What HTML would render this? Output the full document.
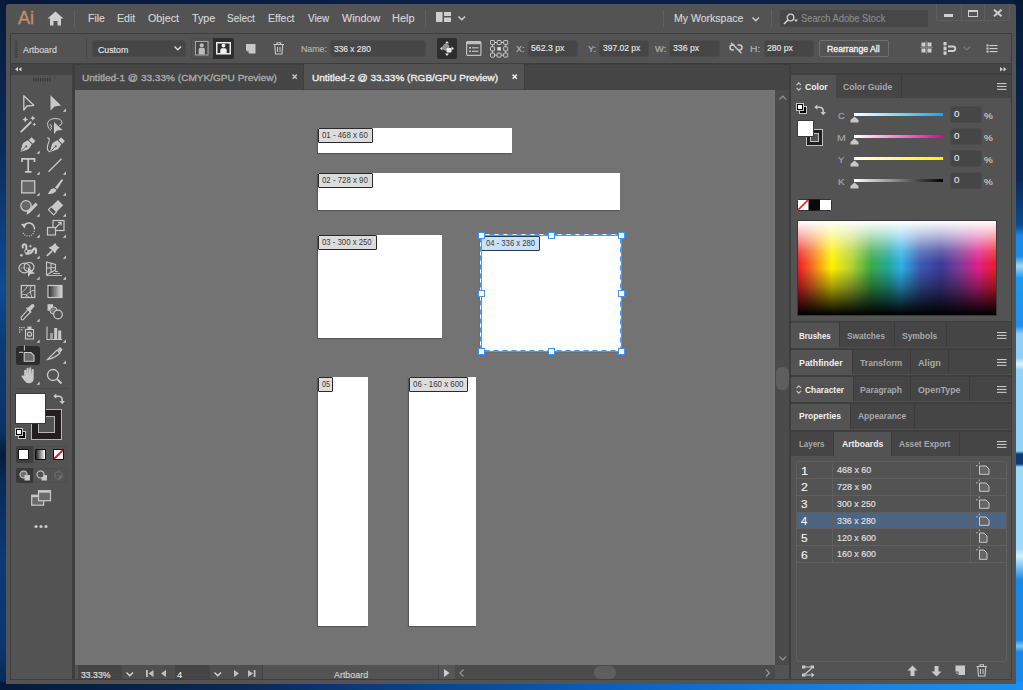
<!DOCTYPE html>
<html><head><meta charset="utf-8"><style>
html,body{margin:0;padding:0;width:1023px;height:690px;overflow:hidden;background:#0b2446;}
.a{position:absolute;box-sizing:border-box;}
.t{position:absolute;white-space:nowrap;line-height:1;font-family:"Liberation Sans",sans-serif;transform-origin:0 0;}
svg{position:absolute;overflow:visible;}
</style></head><body>
<div class="a" style="left:0;top:0;width:1023px;height:690px;background:#0a2346"></div>
<div class="a" style="left:0;top:0;width:1023px;height:6px;background:linear-gradient(90deg,#06183a 0%,#0a2248 50%,#082040 100%)"></div>
<div class="a" style="left:0;top:0;width:8px;height:690px;background:linear-gradient(180deg,#071a3a 0px,#0a2c5c 150px,#0b3f7e 230px,#0c4b92 290px,#0a3c78 340px,#0a3468 430px,#061b3c 455px,#082a58 480px,#0a3a78 560px,#0a3670 650px,#072450 690px)"></div>
<div class="a" style="left:1014px;top:0;width:9px;height:690px;background:linear-gradient(180deg,#061a38 0px,#0a2a55 180px,#0b4a92 225px,#1a8ae8 236px,#1a8ae8 256px,#a0d8f5 266px,#1a9af0 278px,#1e90ee 326px,#8ed0f5 334px,#8ed0f5 358px,#e0f4fc 364px,#90d4f8 370px,#90d4f8 451px,#0b3c7a 454px,#0b3c7a 464px,#9cd8f8 467px,#9cd8f8 548px,#d8f0fc 556px,#9cd8f8 562px,#1a88e8 580px,#1a88e8 640px,#7cc4f0 646px,#1a88e8 652px,#1a88e8 690px)"></div>
<div class="a" style="left:0;top:682px;width:1023px;height:8px;background:linear-gradient(90deg,#041a3a 0%,#0a2a5a 25%,#0a3a78 35%,#0a50a0 50%,#0a60c0 60%,#1278d8 75%,#1a82e0 85%,#1a90f0 100%)"></div>
<div class="a" style="left:6px;top:4px;width:1010px;height:680px;background:#535353;border-radius:3px 3px 0 0;"></div>
<div class="a" style="left:10px;top:33px;width:1002px;height:31px;background:#535353;border:1px solid #3e3e3e;"></div>
<div class="a" style="left:10px;top:64px;width:1002px;height:616px;background:#3e3e3e;"></div>
<div class="a" style="left:11px;top:64px;width:61px;height:11px;background:#454545;"></div>
<div class="a" style="left:11px;top:75px;width:61px;height:604px;background:#535353;"></div>
<div class="a" style="left:75px;top:64px;width:714px;height:26px;background:#454545;"></div>
<div class="a" style="left:303px;top:64px;width:1px;height:26px;background:#3e3e3e;"></div>
<div class="a" style="left:304px;top:64px;width:220px;height:26px;background:#535353;"></div>
<div class="a" style="left:304px;top:89px;width:220px;height:1px;background:#4a4a4a;"></div>
<div class="a" style="left:524px;top:64px;width:1px;height:26px;background:#3e3e3e;"></div>
<div class="a" style="left:525px;top:64px;width:264px;height:1px;background:#3e3e3e;"></div>
<div class="a" style="left:75px;top:64px;width:228px;height:1px;background:#3e3e3e;"></div>
<div class="a" style="left:75px;top:90px;width:700px;height:575px;background:#737373;"></div>
<div class="a" style="left:775px;top:90px;width:14px;height:575px;background:#4b4b4b;"></div>
<div class="a" style="left:776px;top:367px;width:13px;height:23px;background:#5e5e5e;border-radius:6px;"></div>
<div class="a" style="left:75px;top:665px;width:700px;height:14px;background:#535353;"></div>
<div class="a" style="left:455px;top:665px;width:320px;height:14px;background:#4b4b4b;"></div>
<div class="a" style="left:775px;top:665px;width:14px;height:14px;background:#535353;"></div>
<div class="a" style="left:791px;top:64px;width:220px;height:9px;background:#454545;"></div>
<div class="a" style="left:791px;top:75px;width:220px;height:246px;background:#535353;"></div>
<div class="a" style="left:791px;top:75px;width:220px;height:23px;background:#454545;"></div>
<div class="a" style="left:791px;top:75px;width:45px;height:23px;background:#535353;"></div>
<div class="a" style="left:791px;top:322px;width:220px;height:26px;background:#454545;"></div>
<div class="a" style="left:791px;top:347px;width:220px;height:1px;background:#4e4e4e;"></div>
<div class="a" style="left:791px;top:323px;width:48px;height:25px;background:#535353;"></div>
<div class="a" style="left:791px;top:350px;width:220px;height:25px;background:#454545;"></div>
<div class="a" style="left:791px;top:374px;width:220px;height:1px;background:#4e4e4e;"></div>
<div class="a" style="left:791px;top:350px;width:61px;height:25px;background:#535353;"></div>
<div class="a" style="left:791px;top:377px;width:220px;height:25px;background:#454545;"></div>
<div class="a" style="left:791px;top:401px;width:220px;height:1px;background:#4e4e4e;"></div>
<div class="a" style="left:791px;top:377px;width:62px;height:25px;background:#535353;"></div>
<div class="a" style="left:791px;top:404px;width:220px;height:26px;background:#454545;"></div>
<div class="a" style="left:791px;top:429px;width:220px;height:1px;background:#4e4e4e;"></div>
<div class="a" style="left:791px;top:404px;width:59px;height:26px;background:#535353;"></div>
<div class="a" style="left:791px;top:432px;width:220px;height:24px;background:#454545;"></div>
<div class="a" style="left:834px;top:432px;width:57px;height:24px;background:#535353;"></div>
<div class="a" style="left:791px;top:456px;width:220px;height:223px;background:#535353;"></div>
<div class="a" style="left:318px;top:128px;width:194px;height:25px;background:#ffffff;box-shadow:-1px 1px 1px rgba(0,0,0,0.25);"></div>
<div class="a" style="left:318px;top:173px;width:302px;height:37px;background:#ffffff;box-shadow:-1px 1px 1px rgba(0,0,0,0.25);"></div>
<div class="a" style="left:318px;top:235px;width:124px;height:103px;background:#ffffff;box-shadow:-1px 1px 1px rgba(0,0,0,0.25);"></div>
<div class="a" style="left:481px;top:235px;width:140px;height:116px;background:#ffffff;box-shadow:-1px 1px 1px rgba(0,0,0,0.25);"></div>
<div class="a" style="left:318px;top:377px;width:50px;height:249px;background:#ffffff;box-shadow:-1px 1px 1px rgba(0,0,0,0.25);"></div>
<div class="a" style="left:409px;top:377px;width:67px;height:249px;background:#ffffff;box-shadow:-1px 1px 1px rgba(0,0,0,0.25);"></div>
<svg style="left:47px;top:11px" width="17" height="15" viewBox="0 0 17 15"><path d="M8.5 0.5 L16.5 7.5 L14 7.5 L14 14.5 L10.5 14.5 L10.5 10 L6.5 10 L6.5 14.5 L3 14.5 L3 7.5 L0.5 7.5 Z" fill="#cfcfcf"/></svg>
<div class="a" style="left:74px;top:10px;width:1px;height:17px;background:#606060;"></div>
<svg style="left:436px;top:12px" width="16" height="11"><rect x="0" y="0" width="6.5" height="10" fill="#cfcfcf"/><rect x="8" y="0" width="7" height="4" fill="#cfcfcf"/><rect x="8" y="5.5" width="7" height="4.5" fill="#cfcfcf"/></svg>
<svg style="left:458px;top:16px" width="8" height="5"><path d="M0.5 0.5 L3.8 3.8 L7 0.5" stroke="#cfcfcf" stroke-width="1.4" fill="none"/></svg>
<div class="a" style="left:425px;top:10px;width:1px;height:17px;background:#606060;"></div>
<div class="a" style="left:663px;top:10px;width:1px;height:17px;background:#606060;"></div>
<svg style="left:752px;top:17px" width="8" height="5"><path d="M0.5 0.5 L3.8 3.8 L7 0.5" stroke="#cfcfcf" stroke-width="1.4" fill="none"/></svg>
<div class="a" style="left:771px;top:10px;width:1px;height:17px;background:#606060;"></div>
<div class="a" style="left:780px;top:10px;width:148px;height:17px;background:#474747;border-radius:2px;"></div>
<svg style="left:783px;top:13px" width="15" height="12"><circle cx="7.5" cy="4.5" r="3.3" stroke="#cfcfcf" stroke-width="1.3" fill="none"/><path d="M5.2 6.8 L1 11" stroke="#cfcfcf" stroke-width="1.6"/><path d="M11 6.5 L15 6.5 L13 9 Z" fill="#cfcfcf"/></svg>
<div class="a" style="left:936px;top:4px;width:74px;height:17px;border:1px solid #5e5e5e;border-top:none;border-radius:0 0 3px 3px;"></div>
<div class="a" style="left:961px;top:4px;width:1px;height:16px;background:#5e5e5e;"></div>
<div class="a" style="left:984px;top:4px;width:1px;height:16px;background:#5e5e5e;"></div>
<div class="a" style="left:944px;top:14px;width:9px;height:3px;background:#cfcfcf;"></div>
<div class="a" style="left:968px;top:9.5px;width:9.5px;height:7.5px;border:1.6px solid #cfcfcf;border-top-width:2px;"></div>
<svg style="left:993px;top:8.5px" width="10" height="8"><path d="M1 0.8 L8.5 7.3 M8.5 0.8 L1 7.3" stroke="#cfcfcf" stroke-width="2"/></svg>
<svg style="left:14.5px;top:40.5px" width="3" height="18"><rect x="0" y="0.0" width="2.5" height="1.1" fill="#383838"/><rect x="0" y="2.2" width="2.5" height="1.1" fill="#383838"/><rect x="0" y="4.4" width="2.5" height="1.1" fill="#383838"/><rect x="0" y="6.6" width="2.5" height="1.1" fill="#383838"/><rect x="0" y="8.8" width="2.5" height="1.1" fill="#383838"/><rect x="0" y="11.0" width="2.5" height="1.1" fill="#383838"/><rect x="0" y="13.2" width="2.5" height="1.1" fill="#383838"/><rect x="0" y="15.4" width="2.5" height="1.1" fill="#383838"/></svg>
<div class="a" style="left:86px;top:38px;width:1px;height:21px;background:#474747;"></div>
<div class="a" style="left:92px;top:40px;width:94px;height:17px;background:#464646;border:1px solid #4b4b4b;border-radius:3px;"></div>
<svg style="left:174px;top:46px" width="8" height="5"><path d="M0.5 0.5 L3.8 3.8 L7 0.5" stroke="#d8d8d8" stroke-width="1.4" fill="none"/></svg>
<div class="a" style="left:191px;top:38px;width:43px;height:21px;border:1px solid #4a4a4a;border-radius:2px;"></div>
<div class="a" style="left:213px;top:38px;width:21px;height:21px;background:#2d2d2d;border-radius:0 2px 2px 0;"></div>
<svg style="left:194.5px;top:41px" width="14" height="15"><rect x="0.5" y="0.5" width="12.5" height="13.5" stroke="#a8a8a8" fill="#474747"/><circle cx="6.75" cy="4.2" r="2" fill="#bdbdbd"/><path d="M3.7 13.5 L3.7 8.6 Q3.7 6.8 5.4 6.8 L8.1 6.8 Q9.8 6.8 9.8 8.6 L9.8 13.5 Z" fill="#bdbdbd"/></svg>
<svg style="left:215.5px;top:42px" width="15" height="13"><rect x="0.75" y="0.75" width="13.5" height="11" stroke="#eeeeee" stroke-width="1.5" fill="#2d2d2d"/><circle cx="7.5" cy="3.6" r="1.9" fill="#f2f2f2"/><path d="M4.3 11.5 L4.3 7.9 Q4.3 6.2 6 6.2 L9 6.2 Q10.7 6.2 10.7 7.9 L10.7 11.5 Z" fill="#f2f2f2"/></svg>
<svg style="left:246px;top:43.5px" width="10" height="10"><path d="M0 0 L9.5 0 L9.5 9.5 L3.3 9.5 L0 6.2 Z" fill="#c8c8c8"/><path d="M0.3 6.5 L3 6.5 L3 9.2 Z" fill="#8a8a8a"/></svg>
<svg style="left:273px;top:42px" width="12" height="13"><path d="M0.5 2.5 L11 2.5 M4 2.5 L4 0.8 L7.5 0.8 L7.5 2.5 M1.8 3 L2.5 12 L9 12 L9.7 3" stroke="#c8c8c8" stroke-width="1.1" fill="none"/><path d="M4.5 5 L4.5 10 M7 5 L7 10" stroke="#c8c8c8" stroke-width="1"/></svg>
<div class="a" style="left:330px;top:40px;width:96px;height:17px;background:#464646;border:1px solid #4b4b4b;border-radius:3px;"></div>
<div class="a" style="left:437px;top:38px;width:20px;height:21px;background:#2d2d2d;border-radius:2px;"></div>
<svg style="left:439px;top:40px" width="16" height="17"><path d="M8 1 L10 3.5 L6 3.5 Z M8 16 L10 13.5 L6 13.5 Z M1 8.5 L3.5 6.5 L3.5 10.5 Z M15 8.5 L12.5 6.5 L12.5 10.5 Z" fill="#e0e0e0"/><circle cx="7" cy="7.3" r="3" fill="#8f8f8f" stroke="#bdbdbd" stroke-width="0.6"/><rect x="7.5" y="8" width="5" height="4.6" rx="0.8" fill="#e8e8e8"/></svg>
<svg style="left:466px;top:41px" width="16" height="15"><rect x="0.6" y="0.6" width="14.3" height="13.8" rx="1" stroke="#c0c0c0" stroke-width="1.2" fill="none"/><rect x="0.6" y="0.6" width="14.3" height="2.6" fill="#c0c0c0"/><rect x="3" y="6" width="2" height="1.6" fill="#c0c0c0"/><rect x="6" y="6.2" width="6.5" height="1.2" fill="#c0c0c0"/><rect x="3" y="9.5" width="2" height="1.6" fill="#c0c0c0"/><rect x="6" y="9.7" width="6.5" height="1.2" fill="#c0c0c0"/></svg>
<svg style="left:489.5px;top:40px" width="19" height="18"><rect x="0.5" y="0.5" width="4" height="4" rx="0.6" stroke="#c8c8c8" stroke-width="1" fill="none"/><rect x="7.1" y="0.5" width="4" height="4" rx="0.6" stroke="#c8c8c8" stroke-width="1" fill="none"/><rect x="13.7" y="0.5" width="4" height="4" rx="0.6" stroke="#c8c8c8" stroke-width="1" fill="none"/><rect x="0.5" y="6.8" width="4" height="4" rx="0.6" stroke="#c8c8c8" stroke-width="1" fill="none"/><rect x="7.4" y="7.1" width="3.4" height="3.4" fill="#e0e0e0"/><rect x="13.7" y="6.8" width="4" height="4" rx="0.6" stroke="#c8c8c8" stroke-width="1" fill="none"/><rect x="0.5" y="13.1" width="4" height="4" rx="0.6" stroke="#c8c8c8" stroke-width="1" fill="none"/><rect x="7.1" y="13.1" width="4" height="4" rx="0.6" stroke="#c8c8c8" stroke-width="1" fill="none"/><rect x="13.7" y="13.1" width="4" height="4" rx="0.6" stroke="#c8c8c8" stroke-width="1" fill="none"/><path d="M4.5 2.5 L7.1 2.5 M11.1 2.5 L13.7 2.5 M4.5 15.1 L7.1 15.1 M11.1 15.1 L13.7 15.1 M2.5 4.5 L2.5 6.8 M2.5 10.8 L2.5 13.1 M15.7 4.5 L15.7 6.8 M15.7 10.8 L15.7 13.1" stroke="#c8c8c8" stroke-width="1"/></svg>
<div class="a" style="left:528px;top:40px;width:50px;height:17px;background:#464646;border:1px solid #4b4b4b;border-radius:3px;"></div>
<div class="a" style="left:599px;top:40px;width:50px;height:17px;background:#464646;border:1px solid #4b4b4b;border-radius:3px;"></div>
<div class="a" style="left:669px;top:40px;width:51px;height:17px;background:#464646;border:1px solid #4b4b4b;border-radius:3px;"></div>
<svg style="left:729px;top:42px" width="14" height="12"><path d="M5.5 3 L3.5 3 Q1 3 1 5.5 Q1 8 3.5 8 L5 8 M8.5 3 L10.5 3 Q13 3 13 5.5 Q13 8 10.5 8 L9 8" stroke="#c8c8c8" stroke-width="1.5" fill="none"/><path d="M2 0.8 L12.5 11.2" stroke="#c8c8c8" stroke-width="1.5"/></svg>
<div class="a" style="left:764px;top:40px;width:50px;height:17px;background:#464646;border:1px solid #4b4b4b;border-radius:3px;"></div>
<div class="a" style="left:819px;top:40px;width:70px;height:17px;border:1px solid #6e6e6e;border-radius:2px;"></div>
<svg style="left:920px;top:41px" width="14" height="14"><rect x="1.5" y="1.5" width="4" height="4" fill="#cfcfcf"/><rect x="7.5" y="1.5" width="4" height="4" fill="#cfcfcf"/><rect x="1.5" y="7.5" width="4" height="4" fill="#cfcfcf"/><rect x="7.5" y="7.5" width="4" height="4" fill="#cfcfcf"/><path d="M6.5 0 L6.5 13 M0 6.5 L13 6.5" stroke="#8a8a8a" stroke-width="0.8"/></svg>
<svg style="left:943px;top:42px" width="14" height="13"><rect x="0.5" y="0" width="3" height="3.5" fill="#cfcfcf"/><rect x="0.5" y="4.7" width="3" height="3.5" fill="#cfcfcf"/><rect x="0.5" y="9.4" width="3" height="3.5" fill="#cfcfcf"/><path d="M5 4.5 L10 4.5 Q12.3 4.5 12.3 6.8 Q12.3 9 10 9 L5 9" stroke="#cfcfcf" stroke-width="1.8" fill="none"/></svg>
<svg style="left:963px;top:46px" width="8" height="5"><path d="M0.5 0.5 L3.8 3.8 L7 0.5" stroke="#7a7a7a" stroke-width="1.2" fill="none"/></svg>
<svg style="left:986px;top:44px" width="12" height="9"><rect x="0.5" y="0.5" width="2" height="2" fill="#cfcfcf"/><rect x="0.5" y="3.5" width="2" height="2" fill="#cfcfcf"/><rect x="0.5" y="6.5" width="2" height="2" fill="#cfcfcf"/><rect x="3.5" y="1" width="8" height="1.1" fill="#cfcfcf"/><rect x="3.5" y="4" width="8" height="1.1" fill="#cfcfcf"/><rect x="3.5" y="7" width="8" height="1.1" fill="#cfcfcf"/></svg>
<svg style="left:14.5px;top:67px" width="7" height="5"><path d="M3 0 L3 4.5 L0 2.25 Z M6.5 0 L6.5 4.5 L3.5 2.25 Z" fill="#d0d0d0"/></svg>
<svg style="left:32.5px;top:77.5px" width="18" height="4"><rect x="0.0" y="0" width="1.1" height="3.5" fill="#383838"/><rect x="2.3" y="0" width="1.1" height="3.5" fill="#383838"/><rect x="4.6" y="0" width="1.1" height="3.5" fill="#383838"/><rect x="6.9" y="0" width="1.1" height="3.5" fill="#383838"/><rect x="9.2" y="0" width="1.1" height="3.5" fill="#383838"/><rect x="11.5" y="0" width="1.1" height="3.5" fill="#383838"/><rect x="13.8" y="0" width="1.1" height="3.5" fill="#383838"/><rect x="16.1" y="0" width="1.1" height="3.5" fill="#383838"/></svg>
<svg style="left:18px;top:92.5px" width="22" height="20" viewBox="0 0 22 20"><path d="M5.8 2.8 L5.8 17 L9 13 L15.8 12.3 Z" stroke="#c9c9c9" stroke-width="1.3" fill="none" stroke-linejoin="round"/></svg>
<svg style="left:44.5px;top:92.5px" width="22" height="20" viewBox="0 0 22 20"><path d="M5.5 2.3 L5.5 17.5 L9.5 13.5 L16 12.6 Z" fill="#c9c9c9"/><path d="M21.0 15.5 L21.0 18.7 L17.8 18.7 Z" fill="#c9c9c9"/></svg>
<svg style="left:18px;top:113.5px" width="22" height="20" viewBox="0 0 22 20"><path d="M3.2 17.6 L12.8 8.3" stroke="#c9c9c9" stroke-width="1.9" stroke-linecap="round"/><path d="M7.3 2.6 L8.26 4.54 L10.2 5.5 L8.26 6.46 L7.3 8.4 L6.34 6.46 L4.4 5.5 L6.34 4.54 Z M14.8 1.6 L15.66 3.34 L17.400000000000002 4.2 L15.66 5.06 L14.8 6.800000000000001 L13.94 5.06 L12.200000000000001 4.2 L13.94 3.34 Z M16.3 8.4 L16.93 9.67 L18.2 10.3 L16.93 10.93 L16.3 12.200000000000001 L15.67 10.93 L14.4 10.3 L15.67 9.67 Z" fill="#c9c9c9"/></svg>
<svg style="left:44.5px;top:113.5px" width="22" height="20" viewBox="0 0 22 20"><path d="M6 16.5 Q3 15 2.5 10.5 Q2.5 5 10 4.5 Q17 4.5 17 9 Q17 11 14 11.5" stroke="#c9c9c9" stroke-width="1" fill="none"/><path d="M9 8 L9 20 L12 16.5 L17.5 16 Z" fill="#c9c9c9"/><path d="M4.5 11 Q6 10 6.5 12 Q5.5 13.5 6.5 15" stroke="#c9c9c9" stroke-width="1" fill="none"/></svg>
<svg style="left:18px;top:134.5px" width="22" height="20" viewBox="0 0 22 20"><path d="M2.5 17 L4.3 9.8 Q4.8 8.2 6.3 7.3 L9.8 5.2 L13.8 9.2 L11.7 12.7 Q10.8 14.2 9.2 14.7 Z" fill="#c9c9c9"/><path d="M10.9 4.9 L13.6 2.3 L17.4 6.1 L14.8 8.8 Z" fill="#c9c9c9"/><path d="M2.7 16.8 L7.6 11.9" stroke="#535353" stroke-width="0.9"/><circle cx="8.3" cy="11.2" r="1" fill="#535353"/><path d="M21.7 15.5 L21.7 18.7 L18.5 18.7 Z" fill="#c9c9c9"/></svg>
<svg style="left:44.5px;top:134.5px" width="22" height="20" viewBox="0 0 22 20"><g transform="translate(2.5,0)"><path d="M2.5 17 L4.3 9.8 Q4.8 8.2 6.3 7.3 L9.8 5.2 L13.8 9.2 L11.7 12.7 Q10.8 14.2 9.2 14.7 Z" fill="#c9c9c9"/><path d="M10.9 4.9 L13.6 2.3 L17.4 6.1 L14.8 8.8 Z" fill="#c9c9c9"/><path d="M2.7 16.8 L7.6 11.9" stroke="#535353" stroke-width="0.9"/><circle cx="8.3" cy="11.2" r="1" fill="#535353"/></g><path d="M2 3 Q5 2.5 4 6.5 Q2.3 10.5 2.3 13 Q2.5 16.5 5.5 16.8" stroke="#c9c9c9" stroke-width="1.1" fill="none"/></svg>
<svg style="left:18px;top:155.5px" width="22" height="20" viewBox="0 0 22 20"><path d="M4 6 L4 2.8 L16.5 2.8 L16.5 6 M10.2 2.8 L10.2 15.5 M7 15.8 L13.5 15.8" stroke="#c9c9c9" stroke-width="1.7" fill="none"/><path d="M21.7 15.5 L21.7 18.7 L18.5 18.7 Z" fill="#c9c9c9"/></svg>
<svg style="left:44.5px;top:155.5px" width="22" height="20" viewBox="0 0 22 20"><path d="M3.5 15.8 L16.5 2.8" stroke="#c9c9c9" stroke-width="1.3"/><path d="M21.0 15.5 L21.0 18.7 L17.8 18.7 Z" fill="#c9c9c9"/></svg>
<svg style="left:18px;top:176.5px" width="22" height="20" viewBox="0 0 22 20"><rect x="3.7" y="3.9" width="13" height="12" fill="#676767" stroke="#c9c9c9" stroke-width="1.3"/><path d="M21.7 15.5 L21.7 18.7 L18.5 18.7 Z" fill="#c9c9c9"/></svg>
<svg style="left:44.5px;top:176.5px" width="22" height="20" viewBox="0 0 22 20"><path d="M10 10.6 L16.2 2.7 Q17.6 1.6 17.9 3.2 L12.3 12.3 Z" fill="#c9c9c9"/><path d="M9 11.2 Q6 11.2 5 13.6 Q4 15.8 2.6 16.9 Q7.5 17.6 9.9 15.3 Q11.4 13.7 11.5 12.7 Z" fill="#c9c9c9"/><path d="M21.0 15.5 L21.0 18.7 L17.8 18.7 Z" fill="#c9c9c9"/></svg>
<svg style="left:18px;top:197.5px" width="22" height="20" viewBox="0 0 22 20"><circle cx="8" cy="7.8" r="5.2" fill="#676767" stroke="#c9c9c9" stroke-width="1.3"/><path d="M8.3 16.8 L9.3 13.2 L17.6 4.6 L19.7 6.7 L11.5 15.3 Z" fill="#c9c9c9"/><path d="M21.7 15.5 L21.7 18.7 L18.5 18.7 Z" fill="#c9c9c9"/></svg>
<svg style="left:44.5px;top:197.5px" width="22" height="20" viewBox="0 0 22 20"><path d="M13 2 L18.2 7.2 L11.6 13.8 L6.4 8.6 Z" fill="#c9c9c9"/><path d="M6.4 8.6 L11.6 13.8 L8.6 16.8 L3.4 11.6 Z" stroke="#c9c9c9" stroke-width="1.2" fill="none" stroke-linejoin="round"/><path d="M21.0 15.5 L21.0 18.7 L17.8 18.7 Z" fill="#c9c9c9"/></svg>
<svg style="left:18px;top:218.5px" width="22" height="20" viewBox="0 0 22 20"><path d="M5.5 7 Q8 3.5 11.5 4 Q16.5 5 16.5 10.5" stroke="#c9c9c9" stroke-width="1.4" fill="none"/><path d="M16.3 12 Q15 17 10.5 17 Q6 17 4.8 13" stroke="#c9c9c9" stroke-width="1.2" stroke-dasharray="1,1.3" fill="none"/><path d="M3 5 L8.5 4.8 L6.5 9.5 Z" fill="#c9c9c9"/><path d="M21.7 15.5 L21.7 18.7 L18.5 18.7 Z" fill="#c9c9c9"/></svg>
<svg style="left:44.5px;top:218.5px" width="22" height="20" viewBox="0 0 22 20"><rect x="8" y="1.5" width="11" height="10" stroke="#c9c9c9" stroke-width="1.2" fill="none"/><rect x="2.5" y="8.5" width="8" height="7.5" stroke="#c9c9c9" stroke-width="1.2" fill="#5a5a5a"/><path d="M10.5 9 L16 3.5 M13 3.5 L16.2 3.3 L16 6.5" stroke="#c9c9c9" stroke-width="1.1" fill="none"/><path d="M21.0 15.5 L21.0 18.7 L17.8 18.7 Z" fill="#c9c9c9"/></svg>
<svg style="left:18px;top:239.5px" width="22" height="20" viewBox="0 0 22 20"><path d="M4.8 7.6 Q4.2 4.5 6.3 4.2 Q8.6 4.3 8.3 7.5 Q8 10.5 9 13.3" stroke="#c9c9c9" stroke-width="2" fill="none" stroke-linecap="round"/><path d="M8.5 13.6 Q12.8 14.2 15 10 Q16.5 7.8 17.6 8.8 Q18.6 10.2 17.8 13" stroke="#c9c9c9" stroke-width="2.3" fill="none" stroke-linecap="round"/><path d="M8.2 10 L14 9.5 L9.5 13.5 Z" fill="#c9c9c9"/><circle cx="8.2" cy="11.1" r="1.7" fill="#535353" stroke="#c9c9c9" stroke-width="0.9"/><circle cx="3.4" cy="15.2" r="1.3" fill="#c9c9c9"/><path d="M12.4 4.8 L13.9 6.2 L12.4 7.6 L10.9 6.2 Z" fill="#c9c9c9"/><path d="M21.7 15.5 L21.7 18.7 L18.5 18.7 Z" fill="#c9c9c9"/></svg>
<svg style="left:44.5px;top:239.5px" width="22" height="20" viewBox="0 0 22 20"><path d="M3.6 7.7 Q7.6 6.4 10.2 3 Q11.3 6.3 14.5 7.6 Q11.2 9.7 10 13.5 Q7.6 9.6 3.6 7.7 Z" fill="#c9c9c9"/><path d="M6.8 11.2 L2.4 15.3" stroke="#c9c9c9" stroke-width="1.7" stroke-linecap="round"/><path d="M21.0 15.5 L21.0 18.7 L17.8 18.7 Z" fill="#c9c9c9"/></svg>
<svg style="left:18px;top:260.5px" width="22" height="20" viewBox="0 0 22 20"><ellipse cx="6.5" cy="7" rx="5.5" ry="4.8" stroke="#c9c9c9" stroke-width="1.2" fill="none"/><ellipse cx="11" cy="6" rx="5" ry="4.5" stroke="#c9c9c9" stroke-width="1.2" fill="none"/><path d="M3 7 L13 7" stroke="#c9c9c9" stroke-width="0.9" stroke-dasharray="1.5,1"/><path d="M10 6.5 L10 16 L12.5 13 L17 12.5 Z" fill="#c9c9c9"/><path d="M21.7 15.5 L21.7 18.7 L18.5 18.7 Z" fill="#c9c9c9"/></svg>
<svg style="left:44.5px;top:260.5px" width="22" height="20" viewBox="0 0 22 20"><path d="M1.5 1 L1.5 14 L10.5 9 L10.5 3.5 Z M6 2 L6 11.5 M1.5 7 L10.5 6.5" stroke="#c9c9c9" stroke-width="1.1" fill="none"/><path d="M1.5 14.5 L17 14.5 M8 12.5 L15 12.5 M10 10.5 L13 10.5" stroke="#c9c9c9" stroke-width="0.9"/><path d="M21.0 15.5 L21.0 18.7 L17.8 18.7 Z" fill="#c9c9c9"/></svg>
<svg style="left:18px;top:281.5px" width="22" height="20" viewBox="0 0 22 20"><rect x="3.3" y="3.5" width="13.5" height="12" stroke="#c9c9c9" stroke-width="1.2" fill="none"/><path d="M3.5 11 Q8 7 10 3.5 M3.5 13 Q8 11 11 15.5 M7.5 15.5 Q9 10 16.8 8 M13 3.5 Q11 8 14 15.5" stroke="#c9c9c9" stroke-width="0.9" fill="none"/></svg>
<svg style="left:44.5px;top:281.5px" width="22" height="20" viewBox="0 0 22 20"><defs><linearGradient id="gr" x1="0" x2="1"><stop offset="0" stop-color="#2a2a2a"/><stop offset="1" stop-color="#dcdcdc"/></linearGradient></defs><rect x="3" y="3.5" width="14" height="12" stroke="#c9c9c9" stroke-width="1.2" fill="url(#gr)"/></svg>
<svg style="left:18px;top:302.5px" width="22" height="20" viewBox="0 0 22 20"><path d="M3.5 16.5 L3 14.5 L10 6.5 L12.5 9 L5 16.8 Z" stroke="#c9c9c9" stroke-width="1.1" fill="none"/><path d="M9.5 5 L13.5 1.5 Q15 0.5 16 1.8 Q17 3 16 4 L12.5 8 Z" fill="#c9c9c9"/><path d="M8.5 4.8 L13.2 9.5" stroke="#c9c9c9" stroke-width="1.6"/><path d="M21.7 15.5 L21.7 18.7 L18.5 18.7 Z" fill="#c9c9c9"/></svg>
<svg style="left:44.5px;top:302.5px" width="22" height="20" viewBox="0 0 22 20"><rect x="2.5" y="1.2" width="5.5" height="6.5" fill="#c9c9c9"/><circle cx="8.5" cy="7.5" r="3.6" fill="#777" stroke="#c9c9c9" stroke-width="1"/><circle cx="13" cy="11.5" r="4.3" fill="#535353" stroke="#c9c9c9" stroke-width="1.2"/></svg>
<svg style="left:18px;top:323.5px" width="22" height="20" viewBox="0 0 22 20"><g transform="translate(0,1)"><rect x="7.5" y="4.5" width="8" height="9.5" stroke="#c9c9c9" stroke-width="1.1" fill="none"/><rect x="9.5" y="1.5" width="4" height="3" fill="#c9c9c9"/><circle cx="11.5" cy="9.2" r="2" stroke="#c9c9c9" stroke-width="1.2" fill="none"/><rect x="1" y="2" width="1.2" height="1.2" fill="#c9c9c9"/><rect x="3.2" y="2" width="1.2" height="1.2" fill="#c9c9c9"/><rect x="5.4" y="2" width="1.2" height="1.2" fill="#c9c9c9"/><rect x="1" y="4.2" width="1.2" height="1.2" fill="#c9c9c9"/><rect x="3.2" y="4.2" width="1.2" height="1.2" fill="#c9c9c9"/><rect x="1" y="6.4" width="1.2" height="1.2" fill="#c9c9c9"/></g><path d="M21.7 15.5 L21.7 18.7 L18.5 18.7 Z" fill="#c9c9c9"/></svg>
<svg style="left:44.5px;top:323.5px" width="22" height="20" viewBox="0 0 22 20"><g transform="translate(0,1.5)"><path d="M2 1 L2 14 L17 14" stroke="#c9c9c9" stroke-width="1.1" fill="none"/><rect x="5" y="7.5" width="3" height="6.5" fill="#9a9a9a"/><rect x="9.2" y="2.5" width="3" height="11.5" fill="#c9c9c9"/><rect x="13.2" y="5" width="3" height="9" fill="#c9c9c9"/></g><path d="M21.0 15.5 L21.0 18.7 L17.8 18.7 Z" fill="#c9c9c9"/></svg>
<div class="a" style="left:16px;top:346px;width:24px;height:19px;background:#2c2c2c;border-radius:3px;"></div>
<svg style="left:18px;top:344.5px" width="22" height="20" viewBox="0 0 22 20"><path d="M1 7.3 L5 7.3 M6.4 0.5 L6.4 5.5" stroke="#c9c9c9" stroke-width="1"/><path d="M6.2 7.5 L13 7.5 L16 10.5 L16 16.2 L6.2 16.2 Z" fill="#6a6a6a" stroke="#c9c9c9" stroke-width="1.1"/></svg>
<svg style="left:44.5px;top:344.5px" width="22" height="20" viewBox="0 0 22 20"><path d="M2.5 14.5 L12 5 L15 8 Q10 13 2.5 14.5 Z" stroke="#c9c9c9" stroke-width="1.1" fill="none"/><path d="M12.5 4.5 L15 2 L17.5 4.5 L15.5 7.5 Z" fill="#c9c9c9"/><path d="M21.0 15.5 L21.0 18.7 L17.8 18.7 Z" fill="#c9c9c9"/></svg>
<svg style="left:18px;top:365.5px" width="22" height="20" viewBox="0 0 22 20"><g transform="translate(1.2,0.5)"><path d="M5 9.5 L5 4.5 Q5 3.3 6 3.3 Q7 3.3 7 4.5 L7 8 L7.3 2.5 Q7.3 1.3 8.4 1.3 Q9.5 1.3 9.5 2.5 L9.5 8 L10 2 Q10 0.8 11 0.8 Q12 0.8 12 2 L12 8.5 L12.5 3.5 Q12.5 2.5 13.5 2.5 Q14.5 2.5 14.5 3.5 L14.5 11 Q14.5 15.5 11.5 16.5 Q7.5 17.5 5.5 14.5 L2.5 10.5 Q2 9.5 2.8 9 Q3.8 8.5 5 9.5 Z" fill="#c9c9c9"/></g><path d="M21.7 15.5 L21.7 18.7 L18.5 18.7 Z" fill="#c9c9c9"/></svg>
<svg style="left:44.5px;top:365.5px" width="22" height="20" viewBox="0 0 22 20"><g transform="translate(0,1.5)"><circle cx="8" cy="7.5" r="5.5" stroke="#c9c9c9" stroke-width="1.3" fill="none"/><path d="M12 11.5 L16.5 16" stroke="#c9c9c9" stroke-width="2"/></g></svg>
<div class="a" style="left:15px;top:388px;width:53px;height:1px;background:#4a4a4a;"></div>
<div class="a" style="left:31px;top:409px;width:31px;height:31px;background:#231f20;border:1px solid #b5b5b5;"></div>
<div class="a" style="left:38px;top:416px;width:17px;height:17px;background:#535353;border:1px solid #b5b5b5;"></div>
<div class="a" style="left:15px;top:393px;width:31px;height:31px;background:#ffffff;border:1px solid #3a3a3a;"></div>
<svg style="left:53px;top:393px" width="12" height="12"><path d="M2.5 3.2 L5.5 3.2 Q9.2 3.2 9.2 7 L9.2 8.5" stroke="#c9c9c9" stroke-width="1.5" fill="none"/><path d="M0.3 3.2 L3.3 0.6 L3.3 5.8 Z M9.2 11.2 L6.5 8 L11.9 8 Z" fill="#c9c9c9"/></svg>
<svg style="left:15px;top:428px" width="12" height="12"><rect x="3.5" y="3.5" width="7" height="7" fill="#000" stroke="#c8c8c8" stroke-width="1"/><rect x="0.5" y="0.5" width="7" height="7" fill="#fff" stroke="#c8c8c8" stroke-width="1"/><rect x="1.5" y="1.5" width="5" height="5" fill="#fff" stroke="#000" stroke-width="1"/></svg>
<div class="a" style="left:16px;top:446px;width:51px;height:17px;border:1px solid #4e4e4e;border-radius:2px;"></div>
<div class="a" style="left:16px;top:446px;width:17px;height:17px;background:#3e3e3e;border-radius:2px 0 0 2px;"></div>
<div class="a" style="left:33px;top:447px;width:1px;height:15px;background:#4e4e4e;"></div>
<div class="a" style="left:50px;top:447px;width:1px;height:15px;background:#4e4e4e;"></div>
<div class="a" style="left:18px;top:449px;width:11px;height:11px;background:#ffffff;border:1px solid #111;border-radius:1px;"></div>
<div class="a" style="left:35px;top:449px;width:11px;height:11px;border:1px solid #111;border-radius:1px;background:linear-gradient(90deg,#222,#fff)"></div>
<svg style="left:53px;top:449px" width="11" height="11"><rect x="0.5" y="0.5" width="10" height="10" fill="#fff" stroke="#111"/><path d="M1 10 L10 1" stroke="#e8141b" stroke-width="1.8"/></svg>
<div class="a" style="left:16px;top:468px;width:51px;height:15px;border:1px solid #4e4e4e;border-radius:2px;"></div>
<div class="a" style="left:16px;top:468px;width:17px;height:15px;background:#393939;border-radius:2px 0 0 2px;"></div>
<div class="a" style="left:33px;top:469px;width:1px;height:13px;background:#4e4e4e;"></div>
<div class="a" style="left:50px;top:469px;width:1px;height:13px;background:#4e4e4e;"></div>
<svg style="left:19px;top:470px" width="12" height="11"><circle cx="4.5" cy="4.5" r="3.5" stroke="#c9c9c9" stroke-width="1.1" fill="#707070"/><rect x="5.5" y="5" width="5.5" height="5.5" fill="#c9c9c9"/></svg>
<svg style="left:36px;top:470px" width="12" height="11"><rect x="5.5" y="5" width="5.5" height="5.5" fill="#c9c9c9"/><circle cx="4.5" cy="4.5" r="3.5" stroke="#c9c9c9" stroke-width="1.1" fill="#535353"/></svg>
<svg style="left:53px;top:470px" width="12" height="11"><circle cx="5.5" cy="5.5" r="3.8" stroke="#6e6e6e" stroke-width="1.1" fill="none"/><path d="M5.5 5.5 L9.3 5.5 A3.8 3.8 0 0 1 5.5 9.3 Z" fill="#6e6e6e"/></svg>
<svg style="left:31px;top:490px" width="21" height="17"><rect x="0.7" y="5.2" width="12" height="10" fill="#6a6a6a" stroke="#c9c9c9" stroke-width="1.2"/><rect x="0.7" y="5.2" width="12" height="2" fill="#c9c9c9"/><rect x="7.5" y="0.7" width="12" height="10" fill="#6a6a6a" stroke="#c9c9c9" stroke-width="1.2"/><rect x="7.5" y="0.7" width="12" height="2" fill="#c9c9c9"/></svg>
<svg style="left:34px;top:524px" width="14" height="5"><circle cx="2" cy="2.5" r="1.6" fill="#c9c9c9"/><circle cx="7" cy="2.5" r="1.6" fill="#c9c9c9"/><circle cx="12" cy="2.5" r="1.6" fill="#c9c9c9"/></svg>
<svg style="left:291.8px;top:73.8px" width="6" height="6"><path d="M0.6 0.6 L4.8 4.8 M4.8 0.6 L0.6 4.8" stroke="#bdbdbd" stroke-width="1.5"/></svg>
<svg style="left:512.2px;top:73.8px" width="6" height="6"><path d="M0.6 0.6 L4.8 4.8 M4.8 0.6 L0.6 4.8" stroke="#e8e8e8" stroke-width="1.5"/></svg>
<svg style="left:779px;top:95px" width="8" height="5"><path d="M0.5 4.3 L3.8 1 L7 4.3" stroke="#9a9a9a" stroke-width="1.2" fill="none"/></svg>
<svg style="left:779px;top:656px" width="8" height="5"><path d="M0.5 0.7 L3.8 4 L7 0.7" stroke="#9a9a9a" stroke-width="1.2" fill="none"/></svg>
<div class="a" style="left:78px;top:665px;width:44px;height:14px;background:#454545;"></div>
<div class="a" style="left:122px;top:665px;width:16px;height:14px;background:#4e4e4e;"></div>
<svg style="left:126px;top:672px" width="8" height="5"><path d="M0.5 0.5 L3.8 3.8 L7 0.5" stroke="#d8d8d8" stroke-width="1.3" fill="none"/></svg>
<div class="a" style="left:138px;top:665px;width:37px;height:14px;background:#4e4e4e;"></div>
<svg style="left:145.5px;top:670px" width="8" height="7"><rect x="0" y="0" width="1.8" height="7" fill="#c0c0c0"/><path d="M7.5 0 L7.5 7 L2.5 3.5 Z" fill="#c0c0c0"/></svg>
<svg style="left:161px;top:670px" width="6" height="7"><path d="M5 0 L5 7 L0 3.5 Z" fill="#c0c0c0"/></svg>
<div class="a" style="left:175px;top:665px;width:35px;height:14px;background:#454545;"></div>
<div class="a" style="left:210px;top:665px;width:16px;height:14px;background:#4e4e4e;"></div>
<svg style="left:213.5px;top:672px" width="8" height="5"><path d="M0.5 0.5 L3.8 3.8 L7 0.5" stroke="#d8d8d8" stroke-width="1.3" fill="none"/></svg>
<div class="a" style="left:226px;top:665px;width:37px;height:14px;background:#4e4e4e;"></div>
<div class="a" style="left:262px;top:665px;width:1px;height:14px;background:#454545;"></div>
<svg style="left:234px;top:670px" width="6" height="7"><path d="M0 0 L0 7 L5 3.5 Z" fill="#c0c0c0"/></svg>
<svg style="left:247.5px;top:670px" width="8" height="7"><path d="M0 0 L0 7 L5 3.5 Z" fill="#c0c0c0"/><rect x="5.7" y="0" width="1.8" height="7" fill="#c0c0c0"/></svg>
<div class="a" style="left:438px;top:665px;width:1px;height:14px;background:#454545;"></div>
<div class="a" style="left:439px;top:665px;width:16px;height:14px;background:#565656;"></div>
<svg style="left:444px;top:669px" width="6" height="8"><path d="M0 0 L0 8 L5.5 4 Z" fill="#d0d0d0"/></svg>
<svg style="left:459px;top:669px" width="6" height="8"><path d="M4.5 0.5 L1 4 L4.5 7.5" stroke="#9a9a9a" stroke-width="1.1" fill="none"/></svg>
<svg style="left:764.5px;top:669px" width="6" height="8"><path d="M1 0.5 L4.5 4 L1 7.5" stroke="#9a9a9a" stroke-width="1.1" fill="none"/></svg>
<div class="a" style="left:594px;top:666px;width:22px;height:13px;background:#5e5e5e;border-radius:6px;"></div>
<div class="a" style="left:318px;top:128px;width:55px;height:15px;background:#dcdcdc;border:1px solid #2a2a2a;border-radius:1px;"></div>
<div class="a" style="left:318px;top:173px;width:55px;height:15px;background:#dcdcdc;border:1px solid #2a2a2a;border-radius:1px;"></div>
<div class="a" style="left:318px;top:235px;width:59px;height:15px;background:#dcdcdc;border:1px solid #2a2a2a;border-radius:1px;"></div>
<div class="a" style="left:481px;top:236px;width:59px;height:15px;background:#c9e2f9;border:1px solid #2a3a50;border-radius:1px;"></div>
<div class="a" style="left:318px;top:377px;width:15px;height:15px;background:#dcdcdc;border:1px solid #2a2a2a;border-radius:1px;"></div>
<div class="a" style="left:409px;top:377px;width:59px;height:15px;background:#dcdcdc;border:1px solid #2a2a2a;border-radius:1px;"></div>
<svg style="left:479px;top:233px" width="145" height="121"><rect x="1.5" y="1.5" width="140" height="116" stroke="#f4f8fc" stroke-width="1" fill="none"/><rect x="1.5" y="1.5" width="140" height="116" stroke="#3f95f2" stroke-width="1" stroke-dasharray="5 4" fill="none"/><rect x="2.5" y="2.5" width="140" height="116" stroke="#4a9cf3" stroke-width="1" fill="none"/></svg>
<div class="a" style="left:478.0px;top:232.0px;width:7px;height:7px;background:#ffffff;border:1px solid #3f95f2;"></div>
<div class="a" style="left:478.0px;top:289.5px;width:7px;height:7px;background:#ffffff;border:1px solid #3f95f2;"></div>
<div class="a" style="left:478.0px;top:347.5px;width:7px;height:7px;background:#ffffff;border:1px solid #3f95f2;"></div>
<div class="a" style="left:547.5px;top:232.0px;width:7px;height:7px;background:#ffffff;border:1px solid #3f95f2;"></div>
<div class="a" style="left:547.5px;top:347.5px;width:7px;height:7px;background:#ffffff;border:1px solid #3f95f2;"></div>
<div class="a" style="left:617.5px;top:232.0px;width:7px;height:7px;background:#ffffff;border:1px solid #3f95f2;"></div>
<div class="a" style="left:617.5px;top:289.5px;width:7px;height:7px;background:#ffffff;border:1px solid #3f95f2;"></div>
<div class="a" style="left:617.5px;top:347.5px;width:7px;height:7px;background:#ffffff;border:1px solid #3f95f2;"></div>
<svg style="left:1000px;top:66.8px" width="7" height="5"><path d="M0 0 L0 4.5 L3 2.25 Z M3.5 0 L3.5 4.5 L6.5 2.25 Z" fill="#d0d0d0"/></svg>
<svg style="left:997px;top:83px" width="10" height="7"><rect x="0" y="0" width="9.5" height="1.1" fill="#c8c8c8"/><rect x="0" y="2.9" width="9.5" height="1.1" fill="#c8c8c8"/><rect x="0" y="5.8" width="9.5" height="1.1" fill="#c8c8c8"/></svg>
<div class="a" style="left:901px;top:75px;width:1px;height:23px;background:#3c3c3c;"></div>
<svg style="left:796px;top:82px" width="6" height="9"><path d="M0.6 3.2 L2.8 0.8 L5 3.2 M0.6 5.8 L2.8 8.2 L5 5.8" stroke="#c8c8c8" stroke-width="1.1" fill="none"/></svg>
<svg style="left:796px;top:103px" width="12" height="12"><rect x="3.5" y="3.5" width="7" height="7" fill="#000" stroke="#c8c8c8" stroke-width="1"/><rect x="0.5" y="0.5" width="7" height="7" fill="#fff" stroke="#c8c8c8" stroke-width="1"/><rect x="1.5" y="1.5" width="5" height="5" fill="#fff" stroke="#000" stroke-width="1"/></svg>
<svg style="left:814px;top:104px" width="12" height="12"><path d="M2.5 3.2 L5.5 3.2 Q9.2 3.2 9.2 7 L9.2 8.5" stroke="#c9c9c9" stroke-width="1.5" fill="none"/><path d="M0.3 3.2 L3.3 0.6 L3.3 5.8 Z M9.2 11.2 L6.5 8 L11.9 8 Z" fill="#c9c9c9"/></svg>
<div class="a" style="left:806px;top:129px;width:17px;height:17px;background:#231f20;border:1px solid #c0c0c0;"></div>
<div class="a" style="left:810px;top:133px;width:9px;height:9px;background:#535353;border:1px solid #c0c0c0;"></div>
<div class="a" style="left:797px;top:120px;width:17px;height:17px;background:#ffffff;border:1px solid #3a3a3a;"></div>
<div class="a" style="left:854px;top:113px;width:89px;height:3px;background:linear-gradient(90deg,#fff,#00aeef)"></div>
<svg style="left:850px;top:116px" width="9" height="7"><path d="M0.5 6.5 L0.5 4 L4.5 0.5 L8.5 4 L8.5 6.5 Z" fill="#c8c8c8"/></svg>
<div class="a" style="left:950px;top:106px;width:32px;height:17px;background:#464646;border:1px solid #4b4b4b;border-radius:3px;"></div>
<div class="a" style="left:854px;top:135px;width:89px;height:3px;background:linear-gradient(90deg,#fff,#ec008c)"></div>
<svg style="left:850px;top:138px" width="9" height="7"><path d="M0.5 6.5 L0.5 4 L4.5 0.5 L8.5 4 L8.5 6.5 Z" fill="#c8c8c8"/></svg>
<div class="a" style="left:950px;top:128px;width:32px;height:17px;background:#464646;border:1px solid #4b4b4b;border-radius:3px;"></div>
<div class="a" style="left:854px;top:157px;width:89px;height:3px;background:linear-gradient(90deg,#fff,#fff200)"></div>
<svg style="left:850px;top:160px" width="9" height="7"><path d="M0.5 6.5 L0.5 4 L4.5 0.5 L8.5 4 L8.5 6.5 Z" fill="#c8c8c8"/></svg>
<div class="a" style="left:950px;top:150px;width:32px;height:17px;background:#464646;border:1px solid #4b4b4b;border-radius:3px;"></div>
<div class="a" style="left:854px;top:179px;width:89px;height:3px;background:linear-gradient(90deg,#fff,#000000)"></div>
<svg style="left:850px;top:182px" width="9" height="7"><path d="M0.5 6.5 L0.5 4 L4.5 0.5 L8.5 4 L8.5 6.5 Z" fill="#c8c8c8"/></svg>
<div class="a" style="left:950px;top:172px;width:32px;height:17px;background:#464646;border:1px solid #4b4b4b;border-radius:3px;"></div>
<svg style="left:797px;top:199px" width="35" height="12"><rect x="0.5" y="0.5" width="34" height="11" rx="1" fill="#fff" stroke="#333"/><rect x="11.5" y="0.5" width="11.5" height="11" fill="#0a0a0a"/><path d="M1 11 L11 1" stroke="#e8141b" stroke-width="1.6"/></svg>
<div class="a" style="left:797px;top:220px;width:200px;height:96px;border:1px solid #3a3a3a;background:linear-gradient(180deg,#ffffff 0%,rgba(255,255,255,0.65) 15%,rgba(255,255,255,0.2) 32%,rgba(255,255,255,0) 45%,rgba(0,0,0,0) 50%,rgba(0,0,0,0.35) 70%,rgba(0,0,0,0.75) 88%,#000 100%),linear-gradient(90deg,#ed1c24 0%,#f36f21 7%,#fff200 17%,#b5d334 27%,#3aaa48 37%,#22a8a0 46%,#30b0e8 52%,#3a5ab0 62%,#3e3a98 72%,#7a3a98 81%,#e0208a 91%,#ed1c24 100%)"></div>
<svg style="left:997px;top:332px" width="10" height="7"><rect x="0" y="0" width="9.5" height="1.1" fill="#c8c8c8"/><rect x="0" y="2.9" width="9.5" height="1.1" fill="#c8c8c8"/><rect x="0" y="5.8" width="9.5" height="1.1" fill="#c8c8c8"/></svg>
<svg style="left:997px;top:359px" width="10" height="7"><rect x="0" y="0" width="9.5" height="1.1" fill="#c8c8c8"/><rect x="0" y="2.9" width="9.5" height="1.1" fill="#c8c8c8"/><rect x="0" y="5.8" width="9.5" height="1.1" fill="#c8c8c8"/></svg>
<svg style="left:997px;top:386px" width="10" height="7"><rect x="0" y="0" width="9.5" height="1.1" fill="#c8c8c8"/><rect x="0" y="2.9" width="9.5" height="1.1" fill="#c8c8c8"/><rect x="0" y="5.8" width="9.5" height="1.1" fill="#c8c8c8"/></svg>
<svg style="left:997px;top:441px" width="10" height="7"><rect x="0" y="0" width="9.5" height="1.1" fill="#c8c8c8"/><rect x="0" y="2.9" width="9.5" height="1.1" fill="#c8c8c8"/><rect x="0" y="5.8" width="9.5" height="1.1" fill="#c8c8c8"/></svg>
<div class="a" style="left:839px;top:322px;width:1px;height:25px;background:#3c3c3c;"></div>
<div class="a" style="left:894px;top:322px;width:1px;height:25px;background:#3c3c3c;"></div>
<div class="a" style="left:946px;top:322px;width:1px;height:25px;background:#3c3c3c;"></div>
<div class="a" style="left:852px;top:350px;width:1px;height:24px;background:#3c3c3c;"></div>
<div class="a" style="left:910px;top:350px;width:1px;height:24px;background:#3c3c3c;"></div>
<div class="a" style="left:948px;top:350px;width:1px;height:24px;background:#3c3c3c;"></div>
<div class="a" style="left:853px;top:377px;width:1px;height:24px;background:#3c3c3c;"></div>
<div class="a" style="left:910px;top:377px;width:1px;height:24px;background:#3c3c3c;"></div>
<div class="a" style="left:969px;top:377px;width:1px;height:24px;background:#3c3c3c;"></div>
<div class="a" style="left:850px;top:404px;width:1px;height:25px;background:#3c3c3c;"></div>
<div class="a" style="left:914px;top:404px;width:1px;height:25px;background:#3c3c3c;"></div>
<div class="a" style="left:833px;top:432px;width:1px;height:24px;background:#3c3c3c;"></div>
<div class="a" style="left:891px;top:432px;width:1px;height:24px;background:#3c3c3c;"></div>
<div class="a" style="left:959px;top:432px;width:1px;height:24px;background:#3c3c3c;"></div>
<svg style="left:796px;top:385px" width="6" height="9"><path d="M0.6 3.2 L2.8 0.8 L5 3.2 M0.6 5.8 L2.8 8.2 L5 5.8" stroke="#c8c8c8" stroke-width="1.1" fill="none"/></svg>
<div class="a" style="left:796px;top:461px;width:211px;height:201px;border:1px solid #5f5f5f;border-radius:3px;"></div>
<div class="a" style="left:797px;top:512px;width:209px;height:16px;background:#4b6583;"></div>
<div class="a" style="left:797px;top:478px;width:209px;height:1px;background:#5f5f5f;"></div>
<div class="a" style="left:797px;top:495px;width:209px;height:1px;background:#5f5f5f;"></div>
<div class="a" style="left:797px;top:512px;width:209px;height:1px;background:#5f5f5f;"></div>
<div class="a" style="left:797px;top:528px;width:209px;height:1px;background:#5f5f5f;"></div>
<div class="a" style="left:797px;top:545px;width:209px;height:1px;background:#5f5f5f;"></div>
<div class="a" style="left:797px;top:562px;width:209px;height:1px;background:#5f5f5f;"></div>
<div class="a" style="left:832px;top:463px;width:1px;height:100px;background:#5f5f5f;"></div>
<div class="a" style="left:970px;top:463px;width:1px;height:100px;background:#5f5f5f;"></div>
<svg style="left:976px;top:462.2px" width="14" height="13"><path d="M3.3 0.5 L3.3 2.3 M0 3.8 L1.8 3.8" stroke="#c8c8c8" stroke-width="0.9"/><path d="M3.5 4 L10 4 L13 7 L13 12.3 L3.5 12.3 Z" fill="#666" stroke="#c8c8c8" stroke-width="1"/></svg>
<svg style="left:976px;top:479.0px" width="14" height="13"><path d="M3.3 0.5 L3.3 2.3 M0 3.8 L1.8 3.8" stroke="#c8c8c8" stroke-width="0.9"/><path d="M3.5 4 L10 4 L13 7 L13 12.3 L3.5 12.3 Z" fill="#666" stroke="#c8c8c8" stroke-width="1"/></svg>
<svg style="left:976px;top:495.8px" width="14" height="13"><path d="M3.3 0.5 L3.3 2.3 M0 3.8 L1.8 3.8" stroke="#c8c8c8" stroke-width="0.9"/><path d="M3.5 4 L10 4 L13 7 L13 12.3 L3.5 12.3 Z" fill="#666" stroke="#c8c8c8" stroke-width="1"/></svg>
<svg style="left:976px;top:512.6px" width="14" height="13"><path d="M3.3 0.5 L3.3 2.3 M0 3.8 L1.8 3.8" stroke="#c8c8c8" stroke-width="0.9"/><path d="M3.5 4 L10 4 L13 7 L13 12.3 L3.5 12.3 Z" fill="#666" stroke="#c8c8c8" stroke-width="1"/></svg>
<svg style="left:976px;top:529.4px" width="14" height="14"><path d="M3.3 0.5 L3.3 2.3 M0 3.8 L1.8 3.8" stroke="#c8c8c8" stroke-width="0.9"/><path d="M3.5 4 L8 4 L11 7 L11 13.3 L3.5 13.3 Z" fill="#666" stroke="#c8c8c8" stroke-width="1"/></svg>
<svg style="left:976px;top:546.2px" width="14" height="14"><path d="M3.3 0.5 L3.3 2.3 M0 3.8 L1.8 3.8" stroke="#c8c8c8" stroke-width="0.9"/><path d="M3.5 4 L8 4 L11 7 L11 13.3 L3.5 13.3 Z" fill="#666" stroke="#c8c8c8" stroke-width="1"/></svg>
<svg style="left:802px;top:665px" width="13" height="13"><rect x="0" y="0.5" width="3.5" height="3" fill="#c9c9c9"/><rect x="8.5" y="0.5" width="3.5" height="3" fill="#c9c9c9"/><rect x="0" y="8.5" width="3.5" height="3" fill="#c9c9c9"/><path d="M3.5 2 L8.5 2 M9.5 3.5 L3 9 M3.5 10 L10 10" stroke="#c9c9c9" stroke-width="1.2"/><path d="M9.5 7.5 L12.5 10 L9.5 12.5 Z" fill="#c9c9c9"/></svg>
<svg style="left:907px;top:665px" width="11" height="12"><path d="M5.5 0.5 L10.5 5.5 L7.5 5.5 L7.5 11 L3.5 11 L3.5 5.5 L0.5 5.5 Z" fill="#c9c9c9"/></svg>
<svg style="left:931px;top:665px" width="11" height="12"><path d="M5.5 11.5 L10.5 6.5 L7.5 6.5 L7.5 1 L3.5 1 L3.5 6.5 L0.5 6.5 Z" fill="#c9c9c9"/></svg>
<svg style="left:955px;top:665px" width="11" height="11"><path d="M0.5 0.5 L10 0.5 L10 10 L3.5 10 L3.5 6.5 L0.5 6.5 Z" fill="#c9c9c9"/><path d="M0.5 7.5 L2.5 7.5 L2.5 9.5 Z" fill="#c9c9c9"/></svg>
<svg style="left:976px;top:664px" width="12" height="13"><path d="M0.5 2.5 L11 2.5 M4 2.5 L4 0.8 L7.5 0.8 L7.5 2.5 M1.8 3 L2.5 12 L9 12 L9.7 3" stroke="#c9c9c9" stroke-width="1.1" fill="none"/><path d="M4.5 5 L4.5 10 M7 5 L7 10" stroke="#c9c9c9" stroke-width="1"/></svg>
<div class="t" style="left:88.07px;top:12.58px;font-size:11.25px;color:#d6d6d6;font-weight:normal;transform:scaleX(0.928);-webkit-text-stroke:0.15px #d6d6d6;">File</div>
<div class="t" style="left:117.15px;top:12.58px;font-size:11.25px;color:#d6d6d6;font-weight:normal;transform:scaleX(0.940);-webkit-text-stroke:0.15px #d6d6d6;">Edit</div>
<div class="t" style="left:148.07px;top:12.58px;font-size:11.25px;color:#d6d6d6;font-weight:normal;transform:scaleX(0.957);-webkit-text-stroke:0.15px #d6d6d6;">Object</div>
<div class="t" style="left:191.89px;top:12.58px;font-size:11.25px;color:#d6d6d6;font-weight:normal;transform:scaleX(0.956);-webkit-text-stroke:0.15px #d6d6d6;">Type</div>
<div class="t" style="left:227.30px;top:12.58px;font-size:11.25px;color:#d6d6d6;font-weight:normal;transform:scaleX(0.889);-webkit-text-stroke:0.15px #d6d6d6;">Select</div>
<div class="t" style="left:267.76px;top:12.58px;font-size:11.25px;color:#d6d6d6;font-weight:normal;transform:scaleX(0.928);-webkit-text-stroke:0.15px #d6d6d6;">Effect</div>
<div class="t" style="left:307.70px;top:12.58px;font-size:11.25px;color:#d6d6d6;font-weight:normal;transform:scaleX(0.878);-webkit-text-stroke:0.15px #d6d6d6;">View</div>
<div class="t" style="left:342.00px;top:12.58px;font-size:11.25px;color:#d6d6d6;font-weight:normal;transform:scaleX(0.955);-webkit-text-stroke:0.15px #d6d6d6;">Window</div>
<div class="t" style="left:392.32px;top:12.58px;font-size:11.25px;color:#d6d6d6;font-weight:normal;transform:scaleX(0.976);-webkit-text-stroke:0.15px #d6d6d6;">Help</div>
<div class="t" style="left:673.76px;top:12.68px;font-size:11.25px;color:#d6d6d6;font-weight:normal;transform:scaleX(0.935);-webkit-text-stroke:0.15px #d6d6d6;">My Workspace</div>
<div class="t" style="left:801.33px;top:13.01px;font-size:10.97px;color:#8c8c8c;font-weight:normal;transform:scaleX(0.848);-webkit-text-stroke:0.15px #8c8c8c;">Search Adobe Stock</div>
<div class="t" style="left:17.50px;top:7.74px;font-size:19.20px;color:#c48d66;font-weight:normal;transform:scaleX(0.944);-webkit-text-stroke:0.35px #c48d66;">Ai</div>
<div class="t" style="left:22.90px;top:45.98px;font-size:8.64px;color:#d4d4d4;font-weight:normal;transform:scaleX(1.023);-webkit-text-stroke:0.15px #d4d4d4;">Artboard</div>
<div class="t" style="left:97.66px;top:45.54px;font-size:9.05px;color:#e4e4e4;font-weight:normal;transform:scaleX(0.971);-webkit-text-stroke:0.15px #e4e4e4;">Custom</div>
<div class="t" style="left:300.69px;top:45.17px;font-size:8.78px;color:#b4b4b4;font-weight:normal;transform:scaleX(1.005);-webkit-text-stroke:0.15px #b4b4b4;">Name:</div>
<div class="t" style="left:334.45px;top:44.58px;font-size:8.64px;color:#e4e4e4;font-weight:normal;transform:scaleX(0.971);-webkit-text-stroke:0.15px #e4e4e4;">336 x 280</div>
<div class="t" style="left:516.22px;top:45.27px;font-size:8.78px;color:#b4b4b4;font-weight:normal;transform:scaleX(1.034);-webkit-text-stroke:0.15px #b4b4b4;">X:</div>
<div class="t" style="left:531.15px;top:44.27px;font-size:8.78px;color:#e4e4e4;font-weight:normal;transform:scaleX(0.993);-webkit-text-stroke:0.15px #e4e4e4;">562.3 px</div>
<div class="t" style="left:588.12px;top:45.27px;font-size:8.78px;color:#b4b4b4;font-weight:normal;transform:scaleX(1.049);-webkit-text-stroke:0.15px #b4b4b4;">Y:</div>
<div class="t" style="left:602.65px;top:44.27px;font-size:8.78px;color:#e4e4e4;font-weight:normal;transform:scaleX(0.966);-webkit-text-stroke:0.15px #e4e4e4;">397.02 px</div>
<div class="t" style="left:655.10px;top:45.27px;font-size:8.78px;color:#b4b4b4;font-weight:normal;transform:scaleX(1.072);-webkit-text-stroke:0.15px #b4b4b4;">W:</div>
<div class="t" style="left:672.74px;top:44.27px;font-size:8.78px;color:#e4e4e4;font-weight:normal;transform:scaleX(0.992);-webkit-text-stroke:0.15px #e4e4e4;">336 px</div>
<div class="t" style="left:750.47px;top:45.27px;font-size:8.78px;color:#b4b4b4;font-weight:normal;transform:scaleX(1.177);-webkit-text-stroke:0.15px #b4b4b4;">H:</div>
<div class="t" style="left:766.97px;top:44.27px;font-size:8.78px;color:#e4e4e4;font-weight:normal;transform:scaleX(0.983);-webkit-text-stroke:0.15px #e4e4e4;">280 px</div>
<div class="t" style="left:827.30px;top:45.34px;font-size:9.05px;color:#f0f0f0;font-weight:normal;transform:scaleX(0.962);-webkit-text-stroke:0.35px #f0f0f0;">Rearrange All</div>
<div class="t" style="left:81.99px;top:72.67px;font-size:9.60px;color:#a9a9a9;font-weight:normal;transform:scaleX(1.049);-webkit-text-stroke:0.35px #a9a9a9;">Untitled-1 @ 33.33% (CMYK/GPU Preview)</div>
<div class="t" style="left:311.50px;top:72.67px;font-size:9.60px;color:#ececec;font-weight:normal;transform:scaleX(1.041);-webkit-text-stroke:0.35px #ececec;">Untitled-2 @ 33.33% (RGB/GPU Preview)</div>
<div class="t" style="left:80.64px;top:669.56px;font-size:9.74px;color:#e0e0e0;font-weight:normal;transform:scaleX(0.894);-webkit-text-stroke:0.15px #e0e0e0;">33.33%</div>
<div class="t" style="left:176.82px;top:669.56px;font-size:9.74px;color:#e0e0e0;font-weight:normal;transform:scaleX(0.946);-webkit-text-stroke:0.15px #e0e0e0;">4</div>
<div class="t" style="left:333.80px;top:670.06px;font-size:9.74px;color:#d4d4d4;font-weight:normal;transform:scaleX(0.913);-webkit-text-stroke:0.15px #d4d4d4;">Artboard</div>
<div class="t" style="left:321.86px;top:130.67px;font-size:8.78px;color:#383838;font-weight:normal;transform:scaleX(0.896);">01 - 468 x 60</div>
<div class="t" style="left:321.86px;top:175.67px;font-size:8.78px;color:#383838;font-weight:normal;transform:scaleX(0.896);">02 - 728 x 90</div>
<div class="t" style="left:322.27px;top:237.67px;font-size:8.78px;color:#383838;font-weight:normal;transform:scaleX(0.886);">03 - 300 x 250</div>
<div class="t" style="left:485.77px;top:238.67px;font-size:8.78px;color:#383838;font-weight:normal;transform:scaleX(0.875);">04 - 336 x 280</div>
<div class="t" style="left:321.78px;top:379.67px;font-size:8.78px;color:#383838;font-weight:normal;transform:scaleX(0.817);">05</div>
<div class="t" style="left:413.26px;top:379.67px;font-size:8.78px;color:#383838;font-weight:normal;transform:scaleX(0.900);">06 - 160 x 600</div>
<div class="t" style="left:804.75px;top:81.84px;font-size:9.88px;color:#f0f0f0;font-weight:bold;transform:scaleX(0.881);">Color</div>
<div class="t" style="left:843.36px;top:81.84px;font-size:9.88px;color:#a8a8a8;font-weight:bold;transform:scaleX(0.872);">Color Guide</div>
<div class="t" style="left:954.01px;top:109.17px;font-size:9.60px;color:#e4e4e4;font-weight:normal;transform:scaleX(1.020);-webkit-text-stroke:0.15px #e4e4e4;">0</div>
<div class="t" style="left:983.50px;top:111.17px;font-size:9.60px;color:#d0d0d0;font-weight:normal;transform:scaleX(1.029);-webkit-text-stroke:0.15px #d0d0d0;">%</div>
<div class="t" style="left:954.01px;top:131.17px;font-size:9.60px;color:#e4e4e4;font-weight:normal;transform:scaleX(1.020);-webkit-text-stroke:0.15px #e4e4e4;">0</div>
<div class="t" style="left:983.50px;top:133.17px;font-size:9.60px;color:#d0d0d0;font-weight:normal;transform:scaleX(1.029);-webkit-text-stroke:0.15px #d0d0d0;">%</div>
<div class="t" style="left:954.01px;top:153.17px;font-size:9.60px;color:#e4e4e4;font-weight:normal;transform:scaleX(1.020);-webkit-text-stroke:0.15px #e4e4e4;">0</div>
<div class="t" style="left:983.50px;top:155.17px;font-size:9.60px;color:#d0d0d0;font-weight:normal;transform:scaleX(1.029);-webkit-text-stroke:0.15px #d0d0d0;">%</div>
<div class="t" style="left:954.01px;top:175.17px;font-size:9.60px;color:#e4e4e4;font-weight:normal;transform:scaleX(1.020);-webkit-text-stroke:0.15px #e4e4e4;">0</div>
<div class="t" style="left:983.50px;top:177.17px;font-size:9.60px;color:#d0d0d0;font-weight:normal;transform:scaleX(1.029);-webkit-text-stroke:0.15px #d0d0d0;">%</div>
<div class="t" style="left:837.84px;top:111.68px;font-size:8.64px;color:#a8a8a8;font-weight:normal;transform:scaleX(1.067);-webkit-text-stroke:0.15px #a8a8a8;">C</div>
<div class="t" style="left:836.95px;top:133.68px;font-size:8.64px;color:#a8a8a8;font-weight:normal;transform:scaleX(1.225);-webkit-text-stroke:0.15px #a8a8a8;">M</div>
<div class="t" style="left:838.11px;top:155.68px;font-size:8.64px;color:#a8a8a8;font-weight:normal;transform:scaleX(1.084);-webkit-text-stroke:0.15px #a8a8a8;">Y</div>
<div class="t" style="left:837.71px;top:177.68px;font-size:8.64px;color:#a8a8a8;font-weight:normal;transform:scaleX(1.137);-webkit-text-stroke:0.15px #a8a8a8;">K</div>
<div class="t" style="left:799.32px;top:331.57px;font-size:8.78px;color:#f0f0f0;font-weight:bold;transform:scaleX(0.904);">Brushes</div>
<div class="t" style="left:847.23px;top:331.57px;font-size:8.78px;color:#a8a8a8;font-weight:bold;transform:scaleX(0.940);">Swatches</div>
<div class="t" style="left:902.23px;top:331.57px;font-size:8.78px;color:#a8a8a8;font-weight:bold;transform:scaleX(0.964);">Symbols</div>
<div class="t" style="left:799.27px;top:358.77px;font-size:8.78px;color:#f0f0f0;font-weight:bold;transform:scaleX(1.007);">Pathfinder</div>
<div class="t" style="left:859.91px;top:358.77px;font-size:8.78px;color:#a8a8a8;font-weight:bold;transform:scaleX(0.985);">Transform</div>
<div class="t" style="left:918.12px;top:358.77px;font-size:8.78px;color:#a8a8a8;font-weight:bold;transform:scaleX(1.041);">Align</div>
<div class="t" style="left:804.66px;top:385.67px;font-size:8.78px;color:#f0f0f0;font-weight:bold;transform:scaleX(0.954);">Character</div>
<div class="t" style="left:860.19px;top:385.67px;font-size:8.78px;color:#a8a8a8;font-weight:bold;transform:scaleX(0.968);">Paragraph</div>
<div class="t" style="left:917.65px;top:385.67px;font-size:8.78px;color:#a8a8a8;font-weight:bold;transform:scaleX(1.007);">OpenType</div>
<div class="t" style="left:799.29px;top:412.35px;font-size:8.92px;color:#f0f0f0;font-weight:bold;transform:scaleX(0.953);">Properties</div>
<div class="t" style="left:857.63px;top:412.35px;font-size:8.92px;color:#a8a8a8;font-weight:bold;transform:scaleX(0.946);">Appearance</div>
<div class="t" style="left:799.32px;top:440.17px;font-size:8.78px;color:#a8a8a8;font-weight:bold;transform:scaleX(0.903);">Layers</div>
<div class="t" style="left:841.83px;top:440.17px;font-size:8.78px;color:#f0f0f0;font-weight:bold;transform:scaleX(0.984);">Artboards</div>
<div class="t" style="left:898.93px;top:440.17px;font-size:8.78px;color:#a8a8a8;font-weight:bold;transform:scaleX(0.947);">Asset Export</div>
<div class="t" style="left:800.69px;top:465.64px;font-size:10.70px;color:#f0f0f0;font-weight:normal;transform:scaleX(1.211);-webkit-text-stroke:0.15px #f0f0f0;">1</div>
<div class="t" style="left:837.22px;top:466.44px;font-size:9.05px;color:#e0e0e0;font-weight:normal;transform:scaleX(0.988);-webkit-text-stroke:0.15px #e0e0e0;">468 x 60</div>
<div class="t" style="left:800.98px;top:482.44px;font-size:10.70px;color:#f0f0f0;font-weight:normal;transform:scaleX(1.158);-webkit-text-stroke:0.15px #f0f0f0;">2</div>
<div class="t" style="left:836.95px;top:483.24px;font-size:9.05px;color:#e0e0e0;font-weight:normal;transform:scaleX(0.995);-webkit-text-stroke:0.15px #e0e0e0;">728 x 90</div>
<div class="t" style="left:801.25px;top:499.24px;font-size:10.70px;color:#f0f0f0;font-weight:normal;transform:scaleX(1.087);-webkit-text-stroke:0.15px #f0f0f0;">3</div>
<div class="t" style="left:837.14px;top:500.04px;font-size:9.05px;color:#e0e0e0;font-weight:normal;transform:scaleX(0.973);-webkit-text-stroke:0.15px #e0e0e0;">300 x 250</div>
<div class="t" style="left:801.38px;top:516.04px;font-size:10.70px;color:#f0f0f0;font-weight:normal;transform:scaleX(1.045);-webkit-text-stroke:0.15px #f0f0f0;">4</div>
<div class="t" style="left:837.14px;top:516.84px;font-size:9.05px;color:#e0e0e0;font-weight:normal;transform:scaleX(0.973);-webkit-text-stroke:0.15px #e0e0e0;">336 x 280</div>
<div class="t" style="left:801.12px;top:532.84px;font-size:10.70px;color:#f0f0f0;font-weight:normal;transform:scaleX(1.110);-webkit-text-stroke:0.15px #f0f0f0;">5</div>
<div class="t" style="left:836.78px;top:533.64px;font-size:9.05px;color:#e0e0e0;font-weight:normal;transform:scaleX(0.982);-webkit-text-stroke:0.15px #e0e0e0;">120 x 600</div>
<div class="t" style="left:800.99px;top:549.64px;font-size:10.70px;color:#f0f0f0;font-weight:normal;transform:scaleX(1.133);-webkit-text-stroke:0.15px #f0f0f0;">6</div>
<div class="t" style="left:836.78px;top:550.44px;font-size:9.05px;color:#e0e0e0;font-weight:normal;transform:scaleX(0.982);-webkit-text-stroke:0.15px #e0e0e0;">160 x 600</div>
</body></html>
